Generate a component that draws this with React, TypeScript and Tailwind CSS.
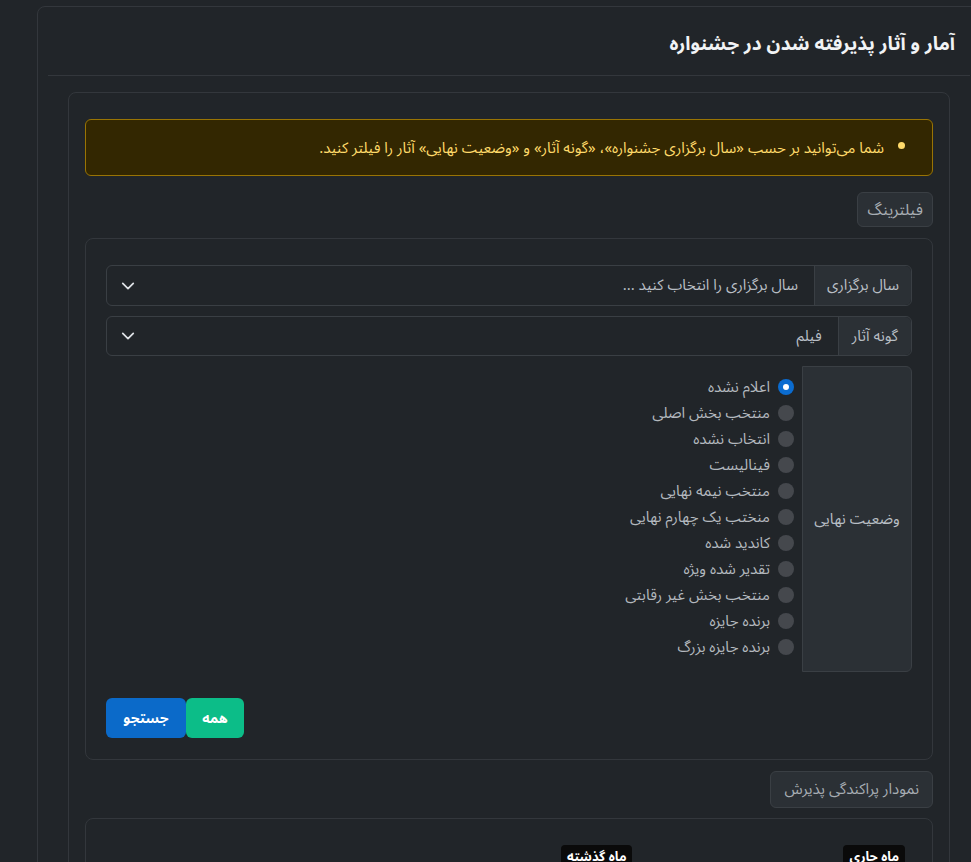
import React from "react";

const statuses = [
  "اعلام نشده",
  "منتخب بخش اصلی",
  "انتخاب نشده",
  "فینالیست",
  "منتخب نیمه نهایی",
  "منختب یک چهارم نهایی",
  "کاندید شده",
  "تقدیر شده ویژه",
  "منتخب بخش غیر رقابتی",
  "برنده جایزه",
  "برنده جایزه بزرگ",
];

function Chevron() {
  return (
    <svg width="14" height="14" viewBox="0 0 16 16" fill="none">
      <path d="M2 5l6 6 6-6" stroke="#dee2e6" strokeWidth="2" strokeLinecap="round" strokeLinejoin="round" />
    </svg>
  );
}

export default function App() {
  return (
    <div
      dir="rtl"
      className="w-[971px] h-[862px] overflow-hidden bg-[#212529] text-[#dee2e6]"
      style={{ fontFamily: '"Noto Sans Arabic", "Noto Sans", sans-serif' }}
    >
      <div className="pt-[6px] ml-[37px] mr-[-10px]">
        <div className="border border-[#33373c] rounded-[8px]">
          {/* header */}
          <div className="mx-[10px] border-b border-[#33373c] h-[69px] flex items-center pt-[6px] px-[15px]">
            <h1 className="text-[19px] font-bold text-[#f1f3f5] leading-[28px]">
              آمار و آثار پذیرفته شدن در جشنواره
            </h1>
          </div>

          <div className="px-[30px] pt-4">
            <div className="border border-[#33373c] rounded-[8px] px-4 pt-[26px]">
              {/* alert */}
              <div className="border border-[#997404] bg-[#332701] rounded-[6px] px-4 h-[57px] flex items-center text-[15px] leading-[22px] text-[#ffda6a]">
                <ul className="list-disc pr-8">
                  <li>
                    شما می‌توانید بر حسب «سال برگزاری جشنواره»، «گونه آثار» و «وضعیت نهایی» آثار را فیلتر کنید.
                  </li>
                </ul>
              </div>

              <div className="flex mt-[16px]">
                <div className="h-[35px] px-[9px] flex items-center bg-[#2b3035] border border-[#3a3f44] rounded-[6px] text-[16px] text-[#a7adb3]">
                  فیلترینگ
                </div>
              </div>

              {/* filter card */}
              <div className="mt-[11px] border border-[#33373c] rounded-[8px] px-5 pt-[26px] pb-[21px]">
                <div className="flex h-[41px] border border-[#3a3f44] rounded-[6px]">
                  <div className="flex items-center px-[12px] bg-[#2b3035] border-l border-[#3a3f44] rounded-r-[6px] text-[15px] text-[#b8bec4]">
                    سال برگزاری
                  </div>
                  <div className="flex-1 flex items-center justify-between pr-[16px] pl-[14px] text-[15px] text-[#b8bec4]">
                    <span>سال برگزاری را انتخاب کنید ...</span>
                    <Chevron />
                  </div>
                </div>

                <div className="flex h-[40px] border border-[#3a3f44] rounded-[6px] mt-[10px]">
                  <div className="flex items-center px-[13px] bg-[#2b3035] border-l border-[#3a3f44] rounded-r-[6px] text-[15px] text-[#b8bec4]">
                    گونه آثار
                  </div>
                  <div className="flex-1 flex items-center justify-between pr-[16px] pl-[14px] text-[15px] text-[#b8bec4]">
                    <span>فیلم</span>
                    <Chevron />
                  </div>
                </div>

                <div className="flex mt-[10px]">
                  <div className="w-[110px] flex items-center justify-center bg-[#2b3035] border border-[#3a3f44] rounded-r-[6px] text-[15px] text-[#b8bec4]">
                    وضعیت نهایی
                  </div>
                  <div className="pt-[9px] pb-[11px] pr-[8px]">
                    {statuses.map((s, i) => (
                      <div key={s} className="flex items-center h-[24px] mb-[2px] gap-[8px]">
                        {i === 0 ? (
                          <span className="w-[16px] h-[16px] rounded-full bg-[#0b6cd0] flex items-center justify-center">
                            <span className="w-[6px] h-[6px] rounded-full bg-white" />
                          </span>
                        ) : (
                          <span className="w-[16px] h-[16px] rounded-full bg-[#45484d]" />
                        )}
                        <span className="text-[15px] text-[#b3b8be]">{s}</span>
                      </div>
                    ))}
                  </div>
                </div>

                <div className="flex justify-end mt-[26px]">
                  <button className="h-[40px] w-[58px] bg-[#0cbd88] text-white font-bold text-[14px] rounded-[6px]">
                    همه
                  </button>
                  <button className="h-[40px] w-[80px] bg-[#0b6ac9] text-white font-bold text-[14px] rounded-[6px]">
                    جستجو
                  </button>
                </div>
              </div>

              <div className="flex mt-[11px]">
                <div className="h-[37px] px-[13px] flex items-center bg-[#2b3035] border border-[#3a3f44] rounded-[6px] text-[15px] text-[#a7adb3]">
                  نمودار پراکندگی پذیرش
                </div>
              </div>

              <div className="mt-[10px] border border-[#33373c] rounded-[8px] h-[200px] pt-[26px] pr-[27px]">
                <div className="flex">
                  <span className="h-[26px] px-[6px] flex items-center bg-[#0a0a0a] text-white font-bold text-[13px] rounded-[4px]">
                    ماه جاری
                  </span>
                  <span className="mr-[211px] h-[26px] px-[6px] flex items-center bg-[#0a0a0a] text-white font-bold text-[13px] rounded-[4px]">
                    ماه گذشته
                  </span>
                </div>
              </div>
            </div>
          </div>
        </div>
      </div>
    </div>
  );
}
